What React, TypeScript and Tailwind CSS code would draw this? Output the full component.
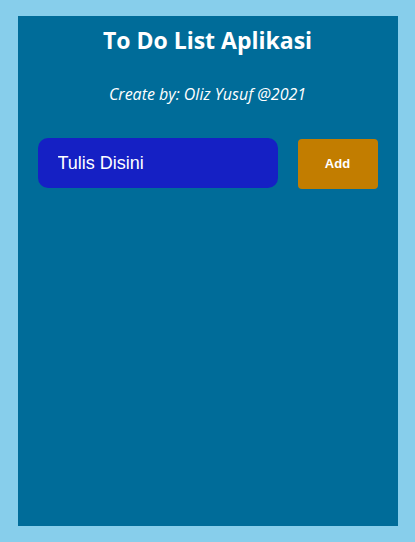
export default function App() {
  return (
    <div className="min-h-[542px] bg-[#87ceeb] pt-4 pb-4">
      <div className="mx-auto flex h-[510px] w-[380px] flex-col items-center bg-[#006c99] text-white">
        <h1 className="mt-[8px] font-['Open_Sans',sans-serif] text-[23px] font-bold leading-[32px]">
          To Do List Aplikasi
        </h1>
        <p className="mt-[27px] font-['Open_Sans',sans-serif] text-[16px] italic leading-[22px]">
          Create by: Oliz Yusuf @2021
        </p>
        <div className="mt-[33px] flex w-full items-start gap-5 px-5">
          <input
            className="h-[50px] w-[240px] rounded-[10px] bg-[#1520c4] px-5 font-['Liberation_Sans',sans-serif] text-[18px] text-white placeholder:text-white outline-none"
            placeholder="Tulis Disini"
          />
          <button className="mt-px h-[50px] w-[80px] rounded-[4px] bg-[#c27d00] font-['Liberation_Sans',sans-serif] text-[13px] font-bold text-white">
            Add
          </button>
        </div>
      </div>
    </div>
  );
}
